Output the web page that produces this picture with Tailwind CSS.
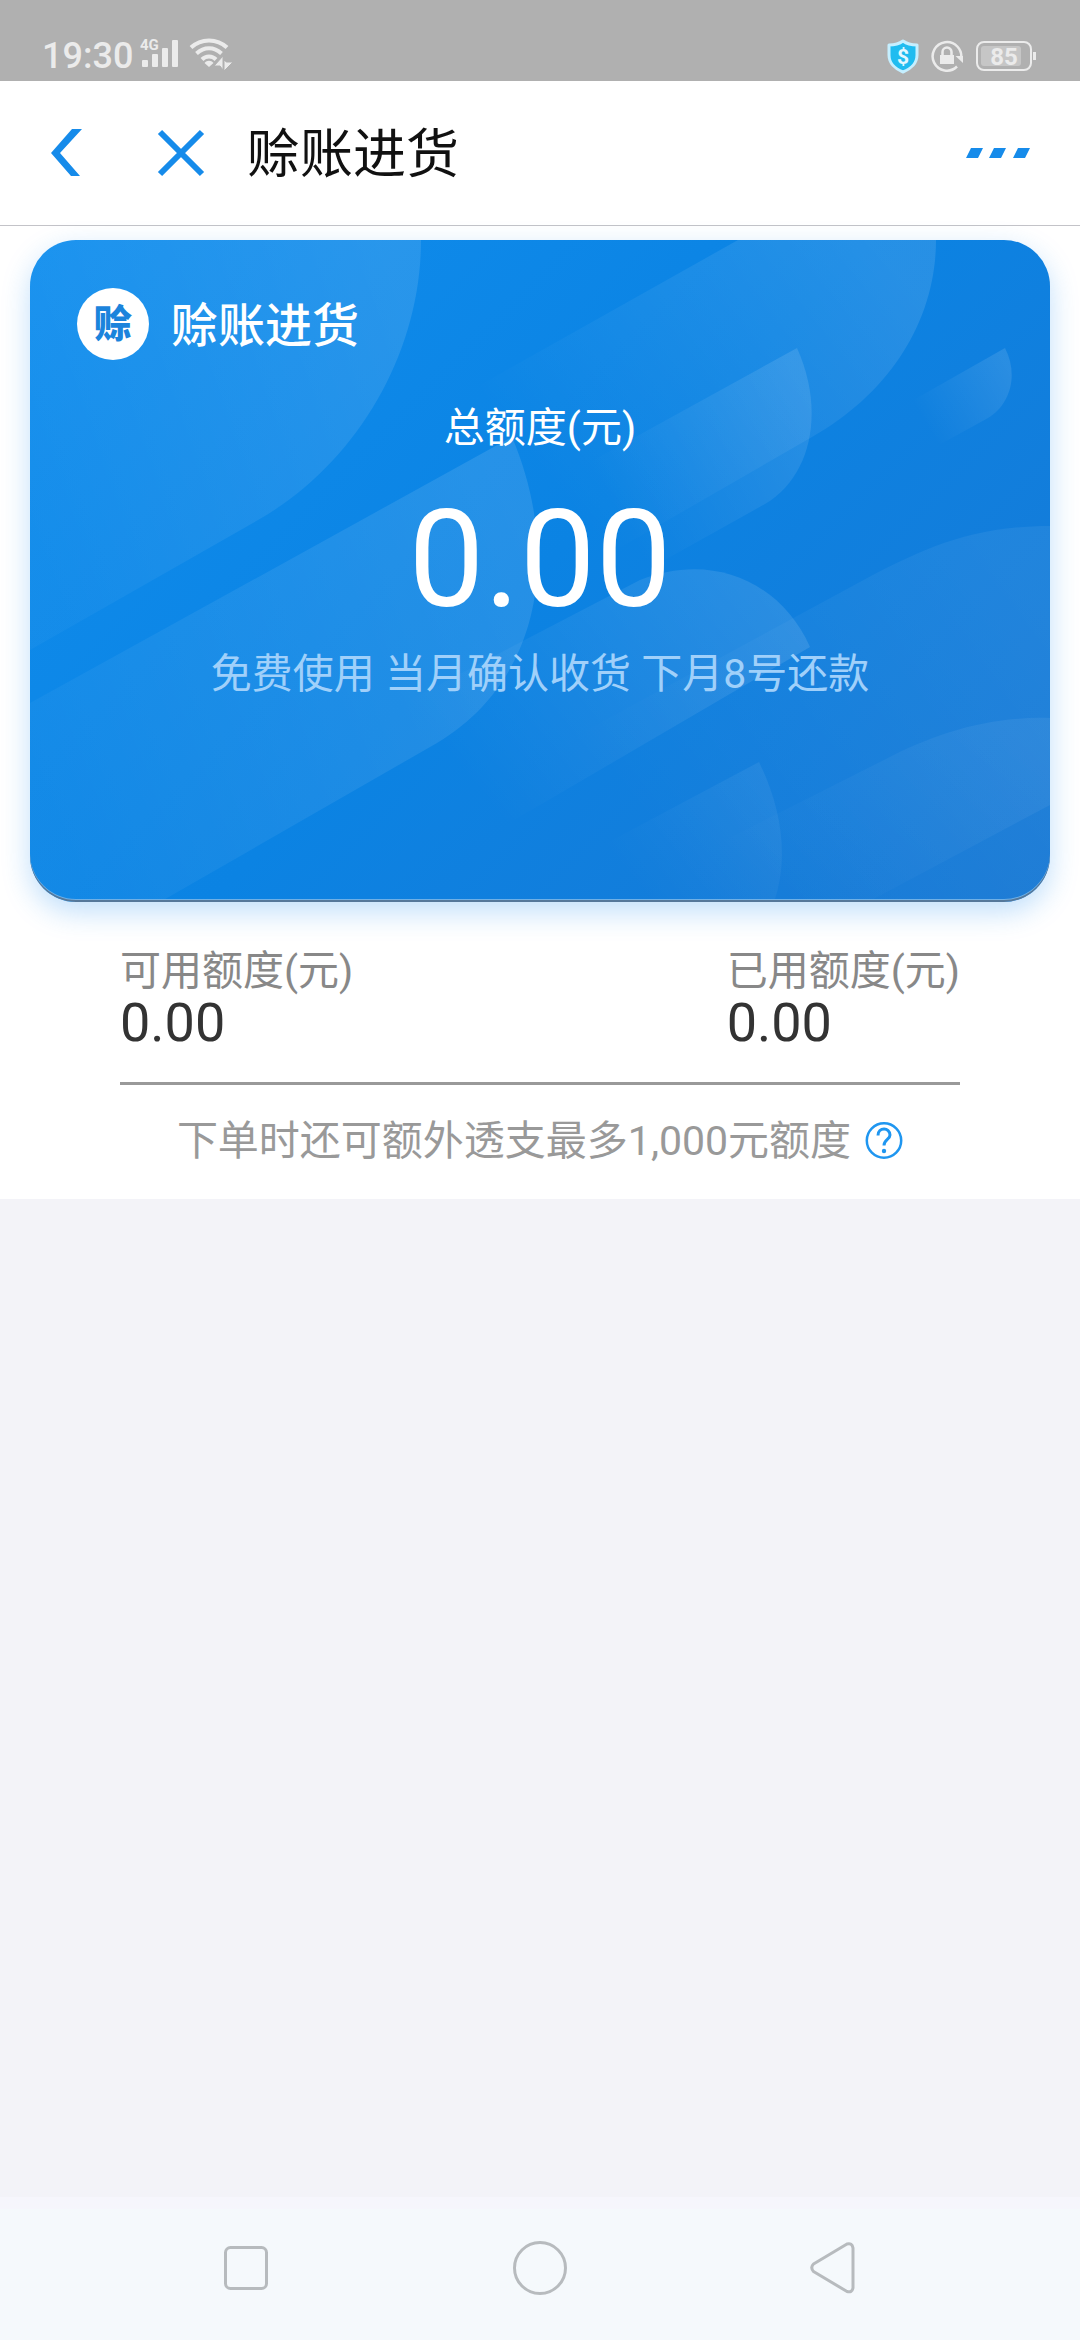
<!DOCTYPE html>
<html lang="zh-CN">
<head>
<meta charset="utf-8">
<meta name="viewport" content="width=device-width, initial-scale=1">
<title>赊账进货</title>
<script src="https://cdn.jsdelivr.net/npm/@tailwindcss/browser@4"></script>
</head>
<body class="flex min-h-screen flex-col bg-[#f3f3f8] font-['Roboto','Noto_Sans_CJK_SC',sans-serif]">

  <!-- Status bar -->
  <div class="flex h-[81px] items-end justify-between bg-[#b0b0b0] pr-[43px] pb-[7px] pl-[42px] text-[#ebebeb]">
    <div class="flex items-center">
      <span class="pt-1 text-[36px] leading-9 font-medium">19:30</span>
      <svg class="ml-[7px] h-9 w-[42px]" viewBox="0 0 42 36" fill="currentColor" aria-label="4G">
        <text x="0" y="14" font-size="15" font-weight="700">4G</text>
        <rect x="2" y="24" width="6" height="7" rx="1"/>
        <rect x="12" y="18" width="6" height="13" rx="1"/>
        <rect x="22" y="12" width="6" height="19" rx="1"/>
        <rect x="32" y="4" width="6" height="27" rx="1"/>
      </svg>
      <svg class="ml-[6px] h-9 w-[44px]" viewBox="0 0 44 36" fill="none" stroke="currentColor" stroke-width="4">
        <path d="M3 11.500C13 2 29 2 39 11.500"/>
        <path d="M8.500 17.500C16 10.500 26 10.500 33.500 17.500"/>
        <path d="M14 23.500C18 19.500 24 19.500 28 23.500"/>
        <path d="M16.500 27C19 24 23 24 25.500 27L21 31Z" fill="currentColor" stroke="none"/>
        <path d="M26 30L35 20V34L32 30ZM36 35V24L38.500 26H45Z" fill="currentColor" stroke="#b0b0b0" stroke-width="1"/>
      </svg>
    </div>
    <div class="flex items-center">
      <svg class="h-9 w-8" viewBox="0 0 32 36">
        <path d="M16 3C12 6 7 7 2 7V17C2 25 8 31 16 34C24 31 30 25 30 17V7C25 7 20 6 16 3Z" fill="#1fbcf0" stroke="#c5efff" stroke-width="3" stroke-linejoin="round"/>
        <text x="16" y="26" text-anchor="middle" font-size="21" font-weight="700" fill="#e2f8ff">$</text>
      </svg>
      <svg class="ml-3 h-9 w-8" viewBox="0 0 32 36" fill="none" stroke="currentColor" stroke-width="2.500">
        <path d="M30 21A14.300 14.300 0 1 0 26 28.500"/>
        <path d="M24.500 18H32V25Z" fill="currentColor" stroke="none"/>
        <rect x="9" y="17" width="14" height="9" fill="currentColor" stroke="none"/>
        <path d="M11.500 18V14A4.500 4.500 0 0 1 20.500 14V18"/>
      </svg>
      <svg class="ml-3 h-9 w-[62px]" viewBox="0 0 62 36">
        <rect x="2" y="4" width="54" height="28" rx="7" fill="none" stroke="#ebebeb" stroke-width="2"/>
        <rect x="6" y="8" width="40" height="20" rx="3" fill="#c6c6c6"/>
        <rect x="58" y="14" width="3" height="8" fill="#ebebeb"/>
        <text x="29" y="27" text-anchor="middle" font-size="24" font-weight="700" fill="#ebebeb">85</text>
      </svg>
    </div>
  </div>

  <!-- Title bar -->
  <header class="flex h-[145px] items-center border-b border-[#c3c3c8] bg-white pr-[50px] pl-[50px]">
    <button type="button" aria-label="返回" class="h-12 w-8">
      <svg class="size-full" viewBox="0 0 32 48" fill="#168bea"><path d="M22 0H32L10 24L30 47H21L1 24Z"/></svg>
    </button>
    <button type="button" aria-label="关闭" class="ml-[75px] size-12">
      <svg class="size-full" viewBox="0 0 48 48" stroke="#168bea" stroke-width="6"><path d="M3 3L45 45M45 3L3 45"/></svg>
    </button>
    <h1 class="ml-[42px] flex-1 pt-1 text-[53px] leading-[72px] text-[#111111]">赊账进货</h1>
    <button type="button" aria-label="更多" class="h-12 w-16">
      <svg class="size-full" viewBox="0 0 64 48" fill="#168bea"><path d="M5 19H17L12 29H0ZM28 19H40L35 29H23ZM52 19H64L59 29H47Z"/></svg>
    </button>
  </header>

  <main class="flex-1">
    <section class="bg-white px-[30px] pt-[14px] pb-7">

      <!-- Credit card -->
      <div class="relative h-[662px] overflow-hidden rounded-[46px] bg-linear-135 from-[#108eee] via-[#0b83e3] to-[#1778d4] shadow-[0_10px_28px_rgba(30,140,240,0.28)]">
        <svg class="absolute inset-0 size-full" viewBox="0 0 1020 662" preserveAspectRatio="none" aria-hidden="true">
          <defs>
            <linearGradient id="fadeRight" x1="0" y1="0.7" x2="1" y2="0.3">
              <stop offset="0" stop-color="#fff" stop-opacity="0.03"/>
              <stop offset="1" stop-color="#fff" stop-opacity="0.11"/>
            </linearGradient>
            <linearGradient id="fadeLeaf" x1="0.15" y1="0.75" x2="1" y2="0.25">
              <stop offset="0" stop-color="#fff" stop-opacity="0"/>
              <stop offset="1" stop-color="#fff" stop-opacity="0.11"/>
            </linearGradient>
            <linearGradient id="fadeSoft" x1="0.15" y1="0.75" x2="1" y2="0.25">
              <stop offset="0" stop-color="#fff" stop-opacity="0"/>
              <stop offset="1" stop-color="#fff" stop-opacity="0.06"/>
            </linearGradient>
          </defs>
          <path fill="url(#fadeRight)" d="M0 0H391C391 115 325 225 228 280L0 410Z"/>
          <path fill="url(#fadeRight)" d="M0 463L482 197C530 310 515 443 400 507L130 662H0Z"/>
          <path fill="url(#fadeLeaf)" d="M708 0H906C906 80 860 153 782 197L560 325L450 145Z"/>
          <path fill="url(#fadeLeaf)" d="M767 108C795 170 782 236 735 264L590 345L560 222Z"/>
          <path fill="url(#fadeLeaf)" d="M975 108C989 135 980 165 958 178L900 210L880 162Z"/>
          <path fill="url(#fadeSoft)" d="M1020 286C940 286 890 310 830 342L520 510L700 662H1020Z"/>
          <path fill="url(#fadeLeaf)" d="M780 407C750 340 680 312 610 340L380 460L420 617L510 565Z"/>
          <path fill="url(#fadeSoft)" d="M729 522C750 565 760 615 744 662H560V612Z"/>
          <path fill="url(#fadeSoft)" d="M1020 478C960 476 905 493 854 520L640 628V662H838L1020 565Z"/>
        </svg>
        <div class="relative flex h-full flex-col items-center">
          <div class="flex items-center gap-[22px] self-start pt-12 pl-[47px]">
            <span class="flex size-[72px] items-center justify-center rounded-full bg-white text-[38px] leading-9 font-black text-[#1b84dc]">赊</span>
            <span class="pt-1 text-[47px] leading-[68px] font-medium text-white">赊账进货</span>
          </div>
          <p class="mt-[38px] text-[41px] leading-[60px] text-white">总额度(元)</p>
          <p class="mt-6 text-[135px] leading-[156px] text-white">0.00</p>
          <p class="mt-[6px] text-[41px] leading-[60px] text-[#a0d0fa]">免费使用 当月确认收货 下月8号还款</p>
        </div>
        <div class="absolute inset-0 rounded-[46px] shadow-[inset_0_-2px_0_#55789a,inset_0_-3px_0_#6fb0e6]"></div>
      </div>

      <!-- Available and used credit -->
      <div class="mx-[90px] mt-[42px] flex justify-between border-b-3 border-[#999999] pb-[34px]">
        <dl>
          <dt class="text-[41px] leading-[54px] text-[#888888]">可用额度(元)</dt>
          <dd class="text-[54px] leading-[50px] text-[#333333]">0.00</dd>
        </dl>
        <dl>
          <dt class="text-[41px] leading-[54px] text-[#888888]">已用额度(元)</dt>
          <dd class="text-[54px] leading-[50px] text-[#333333]">0.00</dd>
        </dl>
      </div>

      <div class="mt-[26px] flex items-center justify-center gap-[14px]">
        <p class="text-[41px] leading-[60px] text-[#999999]">下单时还可额外透支最多1,000元额度</p>
        <button type="button" aria-label="说明" class="size-[38px]">
          <svg class="size-full" viewBox="0 0 38 38" fill="none" stroke="#1f96f0" stroke-width="2.500">
            <circle cx="19" cy="18.500" r="17.200"/>
            <path d="M13 13.500C13 5 25 5 25 13C25 17.500 19 17.500 19 23.500" stroke-width="3"/>
            <circle cx="19" cy="29" r="2.200" fill="#1f96f0" stroke="none"/>
          </svg>
        </button>
      </div>
    </section>
  </main>

  <!-- System navigation -->
  <nav class="flex h-[143px] items-center justify-between border-t-12 border-[#f6f6fc] bg-[#f5f9fc] px-[219px] pb-[14px]">
    <button type="button" aria-label="最近任务" class="size-[54px]">
      <svg class="size-full" viewBox="0 0 54 54" fill="none" stroke="#b7bbbe" stroke-width="3"><rect x="6.500" y="6.500" width="41" height="41" rx="5"/></svg>
    </button>
    <button type="button" aria-label="主屏幕" class="size-[54px]">
      <svg class="size-full" viewBox="0 0 54 54" fill="none" stroke="#b7bbbe" stroke-width="3"><circle cx="27" cy="27" r="25.500"/></svg>
    </button>
    <button type="button" aria-label="返回" class="size-[54px]">
      <svg class="size-full" viewBox="0 0 54 54" fill="none" stroke="#b7bbbe" stroke-width="3" stroke-linejoin="round"><path d="M6.500 23Q3 26.500 6.500 30.500L40 50.500Q45 52 46 47V7Q45 1.500 40 3Z"/></svg>
    </button>
  </nav>
</body>
</html>
